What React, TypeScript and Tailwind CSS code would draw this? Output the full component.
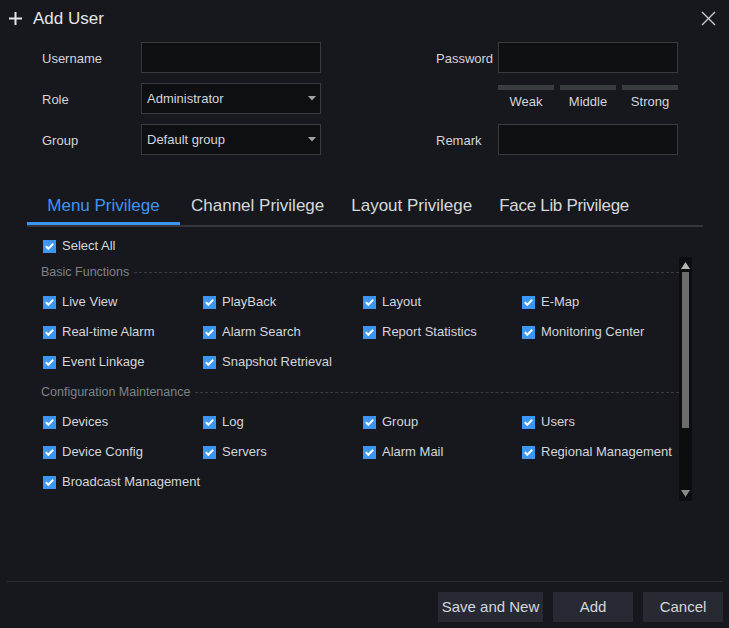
import React from "react";

function Check({ className = "" }: { className?: string }) {
  return (
    <span className={"inline-flex w-[13px] h-[13px] bg-[#3b97f3] items-center justify-center shrink-0 " + className}>
      <svg width="13" height="13" viewBox="0 0 13 13">
        <polyline points="2.8,6.3 5.3,8.8 10.2,3.8" fill="none" stroke="#ffffff" strokeWidth="2" />
      </svg>
    </span>
  );
}

function Item({ label }: { label: string }) {
  return (
    <div className="flex items-center h-[30px]">
      <Check />
      <span className="ml-[6px] text-[13px] text-[#d3d6db] whitespace-nowrap">{label}</span>
    </div>
  );
}

function Header({ label }: { label: string }) {
  return (
    <div className="flex items-center h-[30px]">
      <span className="text-[12.5px] text-[#7f8287] whitespace-nowrap">{label}</span>
      <div className="flex-1 ml-[5px] border-t border-dashed border-[#3a3c41]" />
    </div>
  );
}

function Grid({ items }: { items: string[] }) {
  return (
    <div className="grid grid-cols-[160px_160px_159px_1fr] ml-[2px]">
      {items.map((i) => (
        <Item key={i} label={i} />
      ))}
    </div>
  );
}

function Input() {
  return <div className="w-[180px] h-[31px] bg-[#0e0f12] border border-[#3a3b3f]" />;
}

function Select({ value }: { value: string }) {
  return (
    <div className="w-[180px] h-[31px] bg-[#0e0f12] border border-[#3a3b3f] flex items-center pl-[5px] pr-[4px]">
      <span className="flex-1 text-[13px] text-[#d3d6db]">{value}</span>
      <svg width="8" height="5" viewBox="0 0 8 5">
        <polygon points="0,0 8,0 4,4.5" fill="#a3a3a3" />
      </svg>
    </div>
  );
}

export default function App() {
  const tabs = ["Menu Privilege", "Channel Privilege", "Layout Privilege", "Face Lib Privilege"];
  return (
    <div className="w-[729px] h-[628px] bg-[#16181d] text-[#d3d6db] flex flex-col font-['Liberation_Sans',Arial,sans-serif] overflow-hidden">
      {/* title */}
      <div className="h-[36px] flex items-center pl-[9px] pr-[13px] shrink-0">
        <svg width="13" height="13" viewBox="0 0 13 13">
          <path d="M6.5 0V13M0 6.5H13" stroke="#e4e6ea" strokeWidth="2" />
        </svg>
        <span className="ml-[11px] pt-[2px] text-[17px] text-[#e4e6ea]">Add User</span>
        <div className="flex-1" />
        <svg width="15" height="15" viewBox="0 0 15 15">
          <path d="M1 1L14 14M14 1L1 14" stroke="#c9cbcf" strokeWidth="1.4" />
        </svg>
      </div>

      {/* form */}
      <div className="flex mt-[6px] pl-[42px] shrink-0">
        <div className="flex flex-col gap-[10px]">
          <div className="flex items-center h-[31px]">
            <span className="w-[99px] pt-[2px] text-[13px]">Username</span>
            <Input />
          </div>
          <div className="flex items-center h-[31px]">
            <span className="w-[99px] pt-[2px] text-[13px]">Role</span>
            <Select value="Administrator" />
          </div>
          <div className="flex items-center h-[31px]">
            <span className="w-[99px] pt-[2px] text-[13px]">Group</span>
            <Select value="Default group" />
          </div>
        </div>
        <div className="flex flex-col gap-[10px] ml-[115px]">
          <div className="flex items-center h-[31px]">
            <span className="w-[62px] pt-[2px] text-[13px]">Password</span>
            <Input />
          </div>
          <div className="h-[31px] pl-[62px]">
            <div className="flex gap-[6px] mt-[2px] w-[180px]">
              {["Weak", "Middle", "Strong"].map((s) => (
                <div key={s} className="flex-1 flex flex-col items-center">
                  <div className="w-full h-[5px] bg-[#3a3d40]" />
                  <span className="mt-[4px] text-[13px] leading-[16px]">{s}</span>
                </div>
              ))}
            </div>
          </div>
          <div className="flex items-center h-[31px]">
            <span className="w-[62px] pt-[2px] text-[13px]">Remark</span>
            <Input />
          </div>
        </div>
      </div>

      {/* tabs */}
      <div className="ml-[27px] w-[676px] mt-[38px] flex border-b-2 border-[#34363a] shrink-0">
        {tabs.map((t, i) => (
          <div
            key={t}
            className={
              "h-[32px] pt-[1px] pb-[4px] text-[17px] leading-[24px] whitespace-nowrap border-b-[3px] " +
              (i === 0
                ? "w-[153px] text-center text-[#3d95f2] border-[#3d95f2]"
                : i === 1
                ? "ml-[11px] text-[#d6d8dc] border-transparent"
                : i === 2
                ? "ml-[27px] text-[#d6d8dc] border-transparent"
                : "ml-[27px] tracking-[-0.3px] text-[#d6d8dc] border-transparent")
            }
          >
            {t}
          </div>
        ))}
      </div>

      {/* content */}
      <div className="ml-[41px] shrink-0">
        <div className="flex items-center h-[22px] mt-[8px] ml-[2px]">
          <Check />
          <span className="ml-[6px] text-[13px]">Select All</span>
        </div>
        <div className="flex h-[244px]">
          <div className="w-[638px]">
            <Header label="Basic Functions" />
            <Grid
              items={[
                "Live View",
                "PlayBack",
                "Layout",
                "E-Map",
                "Real-time Alarm",
                "Alarm Search",
                "Report Statistics",
                "Monitoring Center",
                "Event Linkage",
                "Snapshot Retrieval",
              ]}
            />
            <Header label="Configuration Maintenance" />
            <Grid
              items={[
                "Devices",
                "Log",
                "Group",
                "Users",
                "Device Config",
                "Servers",
                "Alarm Mail",
                "Regional Management",
                "Broadcast Management",
              ]}
            />
          </div>
          <div className="w-[13px] h-[244px] bg-[#0c0d0f] flex flex-col items-center">
            <svg width="9" height="7" viewBox="0 0 9 7" className="mt-[5px]">
              <polygon points="4.5,0 9,7 0,7" fill="#b5b5b5" />
            </svg>
            <div className="w-[7px] h-[156px] bg-[#6c6c6c] mt-[3px]" />
            <div className="flex-1" />
            <svg width="9" height="7" viewBox="0 0 9 7" className="mb-[4px]">
              <polygon points="0,0 9,0 4.5,7" fill="#8a8a8a" />
            </svg>
          </div>
        </div>
      </div>

      <div className="flex-1" />

      {/* footer */}
      <div className="mx-[7px] mr-[6px] border-t border-[#2c2e33] pt-[10px] pb-[6px] flex justify-end gap-[10px] shrink-0">
        <button className="w-[105px] h-[30px] bg-[#272a33] text-[15px] text-[#d4d7dc] whitespace-nowrap">Save and New</button>
        <button className="w-[80px] h-[30px] bg-[#272a33] text-[15px] text-[#d4d7dc]">Add</button>
        <button className="w-[80px] h-[30px] bg-[#272a33] text-[15px] text-[#d4d7dc]">Cancel</button>
      </div>
    </div>
  );
}
